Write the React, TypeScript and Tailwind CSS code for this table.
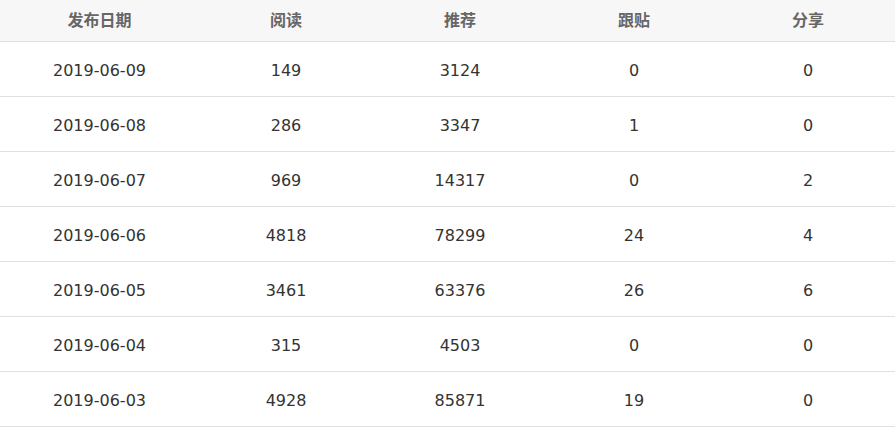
import React from "react";

const rows = [
  ["2019-06-09", "149", "3124", "0", "0"],
  ["2019-06-08", "286", "3347", "1", "0"],
  ["2019-06-07", "969", "14317", "0", "2"],
  ["2019-06-06", "4818", "78299", "24", "4"],
  ["2019-06-05", "3461", "63376", "26", "6"],
  ["2019-06-04", "315", "4503", "0", "0"],
  ["2019-06-03", "4928", "85871", "19", "0"],
];

const heads = ["发布日期", "阅读", "推荐", "跟贴", "分享"];

export default function App() {
  return (
    <div
      className="w-[895px] h-[428px] bg-white overflow-hidden"
      style={{ fontFamily: '"DejaVu Sans", "Noto Sans CJK SC", sans-serif' }}
    >
      <div className="grid grid-cols-[199px_174px_174px_174px_174px] h-[42px] bg-[#f7f7f7] border-b border-[#e0e0e0] items-center text-[16px] font-bold text-[#666]">
        {heads.map((h) => (
          <div key={h} className="text-center">{h}</div>
        ))}
      </div>
      {rows.map((r) => (
        <div
          key={r[0]}
          className="grid grid-cols-[199px_174px_174px_174px_174px] h-[55px] pt-[4px] border-b border-[#e0e0e0] items-center text-[16px] text-[#333]"
        >
          {r.map((c, i) => (
            <div key={i} className="text-center">{c}</div>
          ))}
        </div>
      ))}
    </div>
  );
}
